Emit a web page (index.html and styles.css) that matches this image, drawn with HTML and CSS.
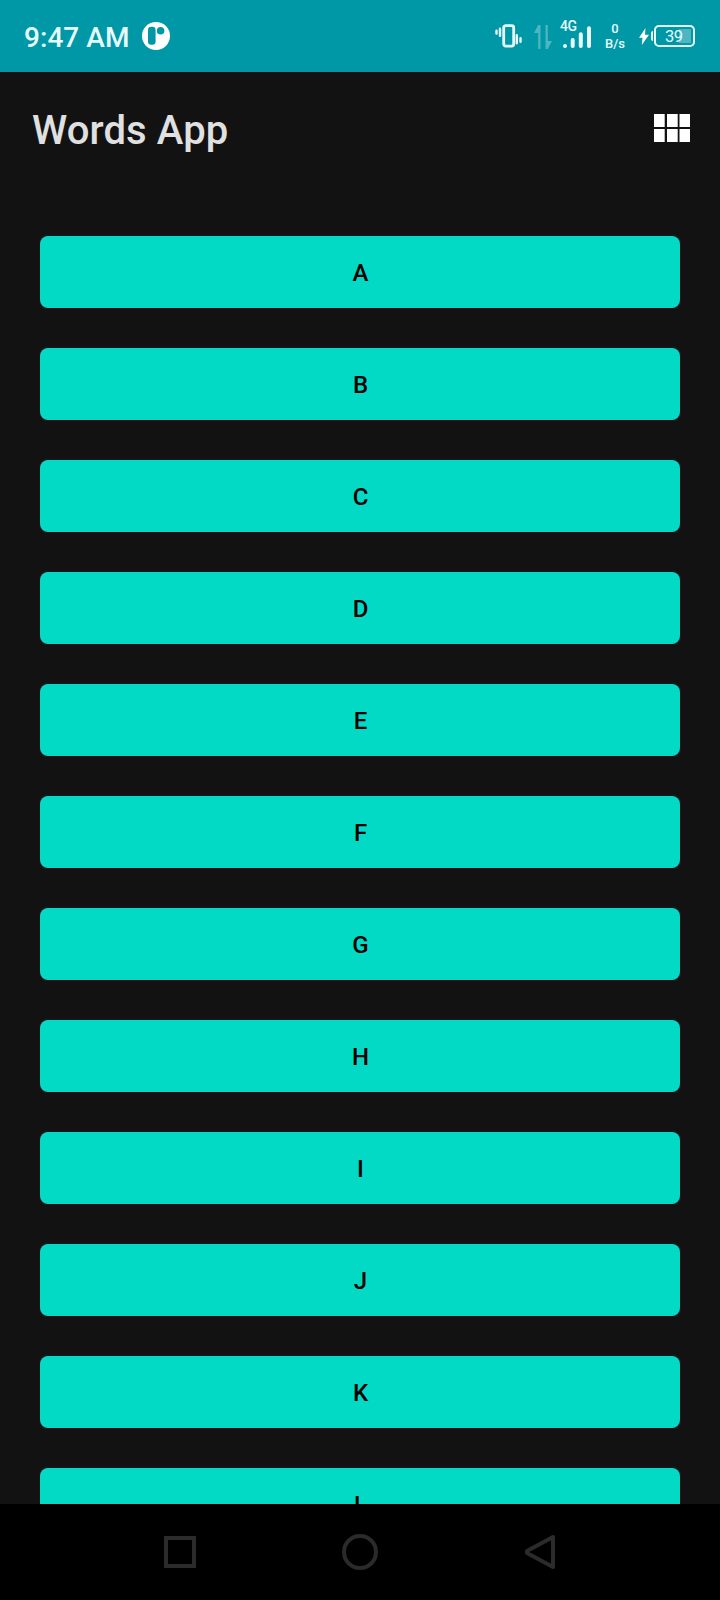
FILE: index.html
```html
<!DOCTYPE html>
<html lang="en">
<head>
<meta charset="utf-8">
<title>Words App</title>
<link rel="stylesheet" href="styles.css">
</head>
<body>
<div class="screen">
  <div class="status">
    <span class="clock">9:47 AM</span>
    <svg class="badge" width="28" height="28" viewBox="0 0 28 28">
      <circle cx="14" cy="14" r="14" fill="#fff"/>
      <rect x="6" y="4.7" width="7.6" height="18" rx="3.2" fill="#0097a7"/>
      <circle cx="18.6" cy="8.7" r="3.8" fill="#0097a7"/>
    </svg>
    <svg class="vibrate" width="28" height="24" viewBox="0 0 28 24" fill="none" stroke="#e6fcfd">
      <rect x="8.7" y="1.7" width="10" height="20.4" rx="2" stroke-width="2.8"/>
      <path d="M1.5 6.7v2.8M5 4.7v7.1M21.8 11.2v8.1M25.5 14.2v3.6" stroke-width="2.4" stroke-linecap="round"/>
    </svg>
    <svg class="data" width="18" height="24" viewBox="0 0 18 24" fill="#4db6c1">
      <path d="M4.2 0H6.5V24H4.2V8H0ZM11.5 0h2.3v16H18l-4.2 8h-2.3Z"/>
    </svg>
    <div class="signal">
      <span class="network">4G</span>
      <svg width="32" height="24" viewBox="0 0 32 24" fill="none" stroke="#e6fcfd" stroke-width="4" stroke-linecap="round">
        <path d="M5 20v0M12.7 14v6M20.8 8.3V20M29 2.3V20"/>
      </svg>
    </div>
    <div class="speed"><span>0</span><span>B/s</span></div>
    <svg class="bolt" width="10" height="17" viewBox="0 0 10 17" fill="#fff"><path d="M6.5 0 0 9.8h3.5L2.8 17 10 6.8H6Z"/></svg>
    <div class="battery"><span>39</span></div>
  </div>
  <div class="appbar">
    <h1 class="title">Words App</h1>
    <svg class="grid" width="37" height="28" viewBox="0 0 37 28" fill="#fff">
      <path d="M0 0h10.7v13H0ZM13 0h10.7v13H13ZM25.5 0H36v13H25.5ZM0 15h10.7v13H0ZM13 15h10.7v13H13ZM25.5 15H36v13H25.5Z"/>
    </svg>
  </div>
  <div class="list">
    <button class="letter">A</button>
    <button class="letter">B</button>
    <button class="letter">C</button>
    <button class="letter">D</button>
    <button class="letter">E</button>
    <button class="letter">F</button>
    <button class="letter">G</button>
    <button class="letter">H</button>
    <button class="letter">I</button>
    <button class="letter">J</button>
    <button class="letter">K</button>
    <button class="letter">L</button>
  </div>
  <div class="nav">
    <svg width="36" height="36" viewBox="0 0 36 36"><path d="M4 4h28v28H4Z"/></svg>
    <svg width="36" height="36" viewBox="0 0 36 36"><circle cx="18" cy="18" r="16"/></svg>
    <svg width="36" height="36" viewBox="0 0 36 36"><path d="M31 3v30L5 19v-2Z"/></svg>
  </div>
</div>
</body>
</html>
```
FILE: styles.css
```css
* { box-sizing: border-box; }
body { margin: 0; background: #121212; font-family: Roboto, "Liberation Sans", sans-serif; }
.screen { width: 720px; height: 1600px; display: flex; flex-direction: column; overflow: hidden; background: #121212; }
.status { height: 72px; flex: none; display: flex; align-items: center; padding-left: 24px; background: #0097a7; color: #e6fcfd; }
.clock { width: 118px; font-size: 28px; font-weight: 500; line-height: 32px; padding-top: 3px; letter-spacing: 0.05px; white-space: nowrap; }
.vibrate { margin-left: 325px; }
.data { margin: 2px 0 0 11px; }
.signal { display: flex; flex-direction: column; width: 32px; height: 48px; margin-left: 8px; padding-top: 7px; }
.network { font-size: 14px; font-weight: 500; line-height: 15px; letter-spacing: -0.4px; margin-bottom: -8px; }
.signal svg { flex: none; }
.speed { width: 30px; margin-left: 8px; display: flex; flex-direction: column; align-items: center; font-size: 13px; font-weight: 500; line-height: 15px; }
.bolt { margin-left: 9px; }
.battery { position: relative; width: 41px; height: 22px; margin-left: 5px; padding-left: 9px; border: 2px solid #e6fcfd; border-radius: 5px; background: linear-gradient(#4db6c1, #4db6c1) 23px 2px / 12px 14px no-repeat; font-size: 16.5px; line-height: 19px; letter-spacing: -0.4px; }
.battery::before { content: ""; position: absolute; left: -5px; top: 4px; width: 2px; height: 10px; border-radius: 2px 0 0 2px; background: #e6fcfd; }
.appbar { height: 112px; flex: none; display: flex; align-items: center; justify-content: space-between; padding: 0 29px 0 32px; }
.title { margin: 0; padding-top: 6px; font-size: 40px; font-weight: 500; line-height: 48px; letter-spacing: 0.12px; color: #e0e0e0; }
.list { flex: 1; min-height: 0; overflow: hidden; display: flex; flex-direction: column; gap: 40px; padding: 52px 40px 0; }
.letter { flex: none; height: 72px; border: 0; border-radius: 8px; padding: 2px 0 0 1px; background: #03dac5; color: #000; font: 500 24px/28px Roboto, "Liberation Sans", sans-serif; }
.nav { height: 96px; flex: none; display: flex; align-items: center; justify-content: center; gap: 144px; background: #000; }
.nav svg { fill: none; stroke: #2b2b2b; stroke-width: 4; stroke-linejoin: round; }
.nav svg:first-child { stroke-linejoin: miter; }
```
